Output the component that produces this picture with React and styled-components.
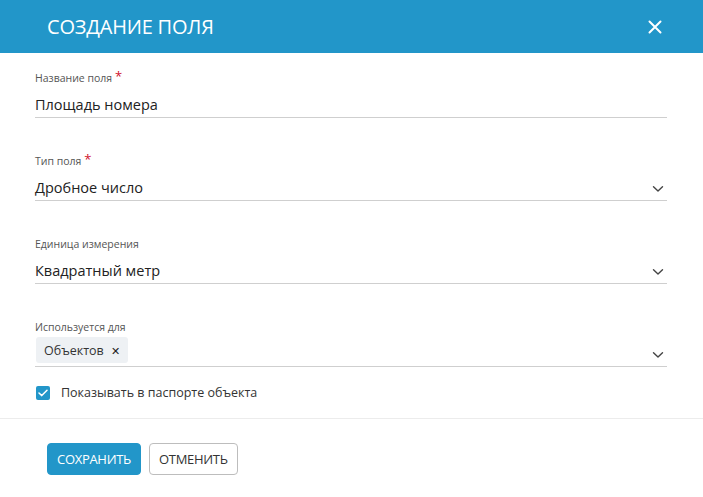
import styled, { createGlobalStyle } from "styled-components";

const GlobalStyle = createGlobalStyle`
  * { box-sizing: border-box; }
  body {
    margin: 0;
    background: #fff;
    font-family: "Open Sans", "Liberation Sans", sans-serif;
    color: #222;
  }
`

function Chevron(){
    return(
        <svg width="12" height="8" viewBox="0 0 12 8" fill="none">
            <path d="M1.5 1.8 L6 6 L10.5 1.8" stroke="#444" strokeWidth="1.4" strokeLinecap="round" strokeLinejoin="round"/>
        </svg>
    )
}

function Field(props){
    const {label, required, value, select, children} = props
    return(
        <FieldBox>
            <Label>{label}{required && <Star>*</Star>}</Label>
            <Control>
                {children ? children : <Value>{value}</Value>}
                {select && <Arrow><Chevron/></Arrow>}
            </Control>
        </FieldBox>
    )
}

function App(){
    return(
        <>
            <GlobalStyle/>
            <Modal>
                <Header>
                    <Title>Создание поля</Title>
                    <Close aria-label="close">
                        <svg width="14" height="14" viewBox="0 0 14 14">
                            <path d="M1.5 1.5 L12.5 12.5 M12.5 1.5 L1.5 12.5" stroke="#fff" strokeWidth="2" strokeLinecap="round"/>
                        </svg>
                    </Close>
                </Header>
                <Body>
                    <Field label="Название поля" required value="Площадь номера"/>
                    <Field label="Тип поля" required value="Дробное число" select/>
                    <Field label="Единица измерения" value="Квадратный метр" select/>
                    <Field label="Используется для" select>
                        <Chip>Объектов <ChipX>✕</ChipX></Chip>
                    </Field>
                    <CheckRow>
                        <Box>
                            <svg width="10" height="8" viewBox="0 0 10 8">
                                <path d="M1 4 L3.8 6.6 L9 1.2" stroke="#fff" strokeWidth="1.5" fill="none" strokeLinecap="round" strokeLinejoin="round"/>
                            </svg>
                        </Box>
                        Показывать в паспорте объекта
                    </CheckRow>
                </Body>
                <Footer>
                    <Button primary>Сохранить</Button>
                    <Button>Отменить</Button>
                </Footer>
            </Modal>
        </>
    )
}

const Modal = styled.div`
width: 703px;
height: 497px;
background: #fff;
`

const Header = styled.header`
height: 53px;
background: #2296c9;
display: flex;
align-items: center;
justify-content: space-between;
padding: 0 41px 0 47px;
`

const Title = styled.h1`
margin: 0;
font-size: 20px;
font-weight: 400;
color: #fff;
text-transform: uppercase;
letter-spacing: -0.2px;
`

const Close = styled.button`
background: none;
border: none;
padding: 0;
display: flex;
cursor: pointer;
margin-top: 1px;
`

const Body = styled.section`
padding: 18px 36px 0 35px;
`

const FieldBox = styled.div`
margin-bottom: 36px;
`

const Label = styled.div`
font-size: 10.5px;
line-height: 14px;
color: #555;
`

const Star = styled.span`
color: #d0112b;
font-size: 13px;
margin-left: 3px;
vertical-align: top;
line-height: 10px;
`

const Control = styled.div`
height: 33px;
border-bottom: 1px solid #cfcfcf;
display: flex;
align-items: center;
justify-content: space-between;
padding-top: 6px;
`

const Value = styled.span`
font-size: 14.5px;
color: #222;
`

const Arrow = styled.span`
display: flex;
margin-right: 3px;
margin-top: 4px;
`

const Chip = styled.span`
display: inline-flex;
align-items: center;
gap: 7px;
height: 26px;
padding: 0 8px;
margin-left: 1px;
margin-top: -6px;
background: #eef1f4;
border-radius: 3px;
font-size: 12.5px;
color: #333;
`

const ChipX = styled.span`
font-size: 11px;
color: #222;
`

const CheckRow = styled.label`
display: flex;
align-items: center;
gap: 11px;
margin-top: -19px;
padding-left: 1px;
font-size: 12.5px;
color: #333;
`

const Box = styled.span`
width: 14px;
height: 14px;
border-radius: 2px;
background: #2296c9;
display: flex;
align-items: center;
justify-content: center;
`

const Footer = styled.footer`
margin-top: 17px;
border-top: 1px solid #ececec;
padding: 24px 47px;
display: flex;
gap: 8px;
`

const Button = styled.button`
height: 32px;
padding: 0 9px;
border-radius: 4px;
font-family: "Open Sans", "Liberation Sans", sans-serif;
font-size: 13px;
text-transform: uppercase;
letter-spacing: -0.3px;
cursor: pointer;
background: ${props => props.primary ? "#2296c9" : "#fff"};
color: ${props => props.primary ? "#fff" : "#333"};
border: 1px solid ${props => props.primary ? "#2296c9" : "#bdbdbd"};
`

export default App
